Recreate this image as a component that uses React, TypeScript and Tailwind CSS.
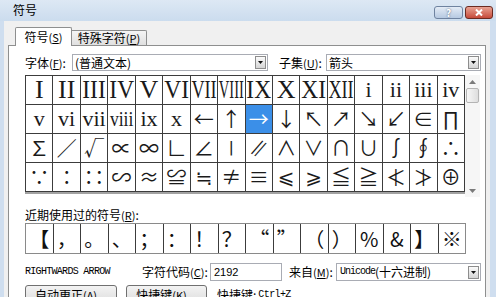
import React from "react";

// font stacks
const UI = "font-['Noto_Sans_CJK_SC','Liberation_Sans',sans-serif]";
const SYM = "font-['Noto_Sans_CJK_SC','DejaVu_Sans',sans-serif]";
const MONO = "font-['Liberation_Mono','Noto_Sans_CJK_SC',monospace]";

const UP = "text-[26px] font-['Liberation_Serif','DejaVu_Serif',serif]";
const LO = "text-[22px] font-['Liberation_Serif','DejaVu_Serif',serif]";
const SY = "text-[20px] font-['Noto_Sans_CJK_SC','DejaVu_Sans',sans-serif]";
const SD = "text-[20px] font-['DejaVu_Sans','Noto_Sans_CJK_SC',sans-serif]";

type Cell = [string, string];

const GRID: Cell[][] = [
  [
    ["I", UP], ["II", UP], ["III", UP + " scale-x-[0.9]"], ["IV", UP + " scale-x-[0.9]"],
    ["V", UP], ["VI", UP + " scale-x-[0.9]"], ["VII", UP + " scale-x-[0.7]"], ["VIII", UP + " scale-x-[0.56]"],
    ["IX", UP + " scale-x-[0.9]"], ["X", UP], ["XI", UP + " scale-x-[0.9]"], ["XII", UP + " scale-x-[0.7]"],
    ["i", LO], ["ii", LO], ["iii", LO], ["iv", LO],
  ],
  [
    ["v", LO], ["vi", LO], ["vii", LO], ["viii", LO + " scale-x-[0.8]"],
    ["ix", LO], ["x", LO], ["←", SY], ["↑", SY],
    ["→", SY], ["↓", SY], ["↖", SY], ["↗", SY],
    ["↘", SY], ["↙", SY], ["∈", SY], ["∏", SY],
  ],
  [
    ["∑", SY], ["∕", SY], ["√", SY], ["∝", SY],
    ["∞", SY], ["∟", SY], ["∠", SY], ["∣", SY],
    ["∥", SY + " -skew-x-[20deg]"], ["∧", SY], ["∨", SY], ["∩", SY],
    ["∪", SY], ["∫", SY], ["∮", SY], ["∴", SY],
  ],
  [
    ["∵", SY], ["∶", SY], ["∷", SY], ["∽", SY],
    ["≈", SY], ["≌", SY], ["≒", SY], ["≠", SY],
    ["≡", SY], ["⩽", SD], ["⩾", SD], ["≦", SY],
    ["≧", SY], ["≮", SY], ["≯", SY], ["⊕", SY],
  ],
];

const RECENT = ["【", "，", "。", "、", "；", "：", "！", "？", "“", "”", "（", "）", "%", "&", "】", "※"];

function Mn({ label, k }: { label: string; k: string }) {
  return (
    <span className="whitespace-nowrap">
      {label}
      <span className="text-[11px]">
        (<span className="underline">{k}</span>)
      </span>
    </span>
  );
}

function DropBtn() {
  return (
    <div className="w-[11px] h-[13px] mr-[1px] border border-[#8d8d8d] bg-gradient-to-b from-[#fbfbfb] to-[#d4d4d4] flex items-center justify-center">
      <svg width="5" height="3" viewBox="0 0 5 3">
        <path d="M0 0 H5 L2.5 3 Z" fill="#111" />
      </svg>
    </div>
  );
}

export default function App() {
  return (
    <div className={`w-[496px] h-[297px] overflow-hidden bg-[#cfdeef] flex flex-col text-[12px] leading-[14px] text-black ${UI}`}>
      {/* title bar */}
      <div className="h-[21px] shrink-0 flex items-start justify-between pl-[13px] pr-[3px] bg-gradient-to-b from-[#dde8f4] to-[#cbdcee]">
        <span className="mt-[3px] text-[12px]">符号</span>
        <div className="flex gap-[2px] mt-[6px]">
          <div className="w-[29px] h-[13px] rounded-[3px] border border-[#6f83a0] bg-gradient-to-b from-[#e4ecf6] to-[#b6c9e1] flex items-center justify-center text-[10px] font-bold leading-none text-white [text-shadow:0_0_2px_#44546a]">
            ?
          </div>
          <div className="w-[28px] h-[13px] rounded-[3px] border border-[#6b2a20] bg-gradient-to-b from-[#e8a293] to-[#c5493a] flex items-center justify-center">
            <svg width="10" height="7" viewBox="0 0 10 7">
              <path d="M2 0.5 L8 6.5 M8 0.5 L2 6.5" stroke="white" strokeWidth="2" />
            </svg>
          </div>
        </div>
      </div>

      {/* client */}
      <div className="flex-1 ml-[4px] mr-[6px] bg-[#f0f0f0] pt-[6px] px-[4px] flex flex-col">
        {/* tabs */}
        <div className="flex items-end pl-[7px] h-[19px] relative z-10 -mb-px shrink-0">
          <div className="w-[57px] h-[19px] bg-white border border-b-0 border-[#8e8f8f] rounded-t-[2px] flex items-center justify-center">
            <Mn label="符号" k="S" />
          </div>
          <div className="w-[75px] h-[15px] mb-px bg-gradient-to-b from-[#f5f5f5] to-[#e0e0e0] border border-l-0 border-b-0 border-[#8e8f8f] rounded-tr-[2px] flex items-center justify-center">
            <Mn label="特殊字符" k="P" />
          </div>
        </div>

        {/* tab page */}
        <div className="flex-1 bg-white border border-[#8e8f8f] pl-[16px] pt-[8px]">
          {/* font / subset row */}
          <div className="flex items-center h-[17px]">
            <div className="w-[47px]">
              <Mn label="字体" k="F" />:
            </div>
            <div className="w-[196px] h-[17px] border border-[#a9acb4] bg-white flex items-center pl-[2px]">
              <span className="flex-1">(普通文本)</span>
              <DropBtn />
            </div>
            <div className="w-[47px] ml-[11px]">
              <Mn label="子集" k="U" />:
            </div>
            <div className="w-[155px] h-[17px] border border-[#a9acb4] bg-white flex items-center pl-[2px]">
              <span className="flex-1">箭头</span>
              <DropBtn />
            </div>
          </div>

          {/* symbol grid + scrollbar */}
          <div className="flex items-start mt-[4px]">
            <div className="w-[440px] border-b-2 border-[#a2a2a2]">
              <div className="grid grid-cols-16 border-t border-l border-[#3c3c3c]">
                {GRID.flatMap((row, r) =>
                  row.map(([t, c], i) => {
                    const sel = r === 1 && i === 8;
                    return (
                      <div
                        key={`${r}-${i}`}
                        className={`h-[29px] border-r border-b border-[#3c3c3c] flex items-center justify-center overflow-hidden ${
                          sel ? "bg-[#3b8fe8] text-white" : "text-[#1a1a1a]"
                        }`}
                      >
                        <span className={`inline-block leading-none whitespace-nowrap ${c}`}>{t}</span>
                      </div>
                    );
                  })
                )}
              </div>
            </div>
            <div className="w-[15px] h-[122px] bg-[#f6f6f6] flex flex-col items-stretch">
              <div className="h-[13px] flex items-center justify-center">
                <svg width="7" height="4" viewBox="0 0 7 4">
                  <path d="M0 4 L3.5 0 L7 4 Z" fill="#7a7a7a" />
                </svg>
              </div>
              <div className="h-[15px] mx-[1px] rounded-[2px] border border-[#b4b4b4] bg-gradient-to-r from-[#f7f7f7] to-[#dedede]" />
              <div className="flex-1" />
              <div className="h-[13px] flex items-center justify-center">
                <svg width="7" height="4" viewBox="0 0 7 4">
                  <path d="M0 0 L3.5 4 L7 0 Z" fill="#7a7a7a" />
                </svg>
              </div>
            </div>
          </div>

          {/* recently used */}
          <div className="mt-[11px]">
            <Mn label="近期使用过的符号" k="R" />:
          </div>
          <div className="mt-[1px] flex w-[441px] h-[31px] border border-[#8a8a8a]">
            {RECENT.map((s, i) => (
              <div
                key={i}
                className={`flex-1 flex items-center justify-center text-[20px] leading-none text-[#111] ${SYM} ${
                  i < RECENT.length - 1 ? "border-r border-[#3c3c3c]" : ""
                }`}
              >
                {s}
              </div>
            ))}
          </div>

          {/* name / code row */}
          <div className="mt-[9px] flex items-center h-[18px]">
            <div className={`w-[117px] text-[10px] tracking-[-0.7px] ${MONO}`}>RIGHTWARDS ARROW</div>
            <div className="w-[68px]">
              <Mn label="字符代码" k="C" />:
            </div>
            <div className="w-[72px] h-[18px] border border-[#a9acb4] bg-white flex items-center pl-[3px] text-[11px] font-['Liberation_Sans',sans-serif]">
              2192
            </div>
            <div className="w-[47px] ml-[7px]">
              <Mn label="来自" k="M" />:
            </div>
            <div className="w-[145px] h-[18px] border border-[#a9acb4] bg-white flex items-center pl-[3px]">
              <span className="flex-1 flex items-center">
                <span className={`text-[10px] tracking-[-1px] ${MONO}`}>Unicode</span>
                <span>(十六进制)</span>
              </span>
              <DropBtn />
            </div>
          </div>

          {/* buttons */}
          <div className="mt-[4px] flex items-start">
            <div className="w-[92px] h-[22px] rounded-[3px] border border-[#707070] bg-gradient-to-b from-[#f3f3f3] to-[#d9d9d9] flex items-start justify-center pt-[2px]">
              <Mn label="自动更正" k="A" />...
            </div>
            <div className="w-[81px] h-[22px] ml-[9px] rounded-[3px] border border-[#707070] bg-gradient-to-b from-[#f3f3f3] to-[#d9d9d9] flex items-start justify-center pt-[2px]">
              <Mn label="快捷键" k="K" />...
            </div>
            <div className="ml-[10px] pt-[3px] flex items-center">
              <span>快捷键:</span>
              <span className={`text-[10px] tracking-[-0.6px] ml-[2px] ${MONO}`}>Ctrl+Z</span>
            </div>
          </div>
        </div>
      </div>
    </div>
  );
}
